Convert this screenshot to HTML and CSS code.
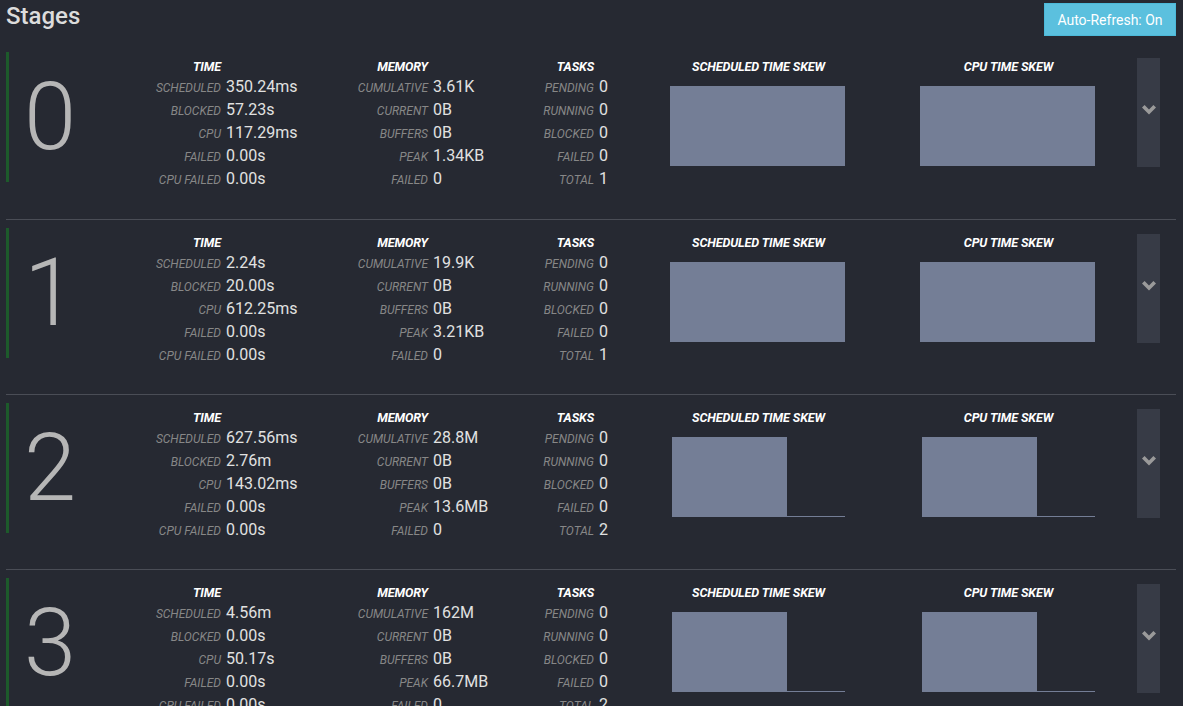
FILE: index.html
```html
<!DOCTYPE html>
<html>
<head>
<meta charset="utf-8">
<title>Stages</title>
<link rel="stylesheet" href="styles.css">
</head>
<body>
<div class="header">
  <h2 class="title">Stages</h2>
  <button class="refresh">Auto-Refresh: On</button>
</div>
<div class="stages">

  <div class="stage">
    <div class="stage-id">0</div>
    <div class="stat stat-time">
      <div class="stat-head">TIME</div><div></div>
      <div class="lbl">SCHEDULED</div><div class="val">350.24ms</div>
      <div class="lbl">BLOCKED</div><div class="val">57.23s</div>
      <div class="lbl">CPU</div><div class="val">117.29ms</div>
      <div class="lbl">FAILED</div><div class="val">0.00s</div>
      <div class="lbl">CPU FAILED</div><div class="val">0.00s</div>
    </div>
    <div class="stat stat-mem">
      <div class="stat-head">MEMORY</div><div></div>
      <div class="lbl">CUMULATIVE</div><div class="val">3.61K</div>
      <div class="lbl">CURRENT</div><div class="val">0B</div>
      <div class="lbl">BUFFERS</div><div class="val">0B</div>
      <div class="lbl">PEAK</div><div class="val">1.34KB</div>
      <div class="lbl">FAILED</div><div class="val">0</div>
    </div>
    <div class="stat stat-tasks">
      <div class="stat-head">TASKS</div><div></div>
      <div class="lbl">PENDING</div><div class="val">0</div>
      <div class="lbl">RUNNING</div><div class="val">0</div>
      <div class="lbl">BLOCKED</div><div class="val">0</div>
      <div class="lbl">FAILED</div><div class="val">0</div>
      <div class="lbl">TOTAL</div><div class="val">1</div>
    </div>
    <div class="skew skew-sched">
      <div class="skew-head">SCHEDULED TIME SKEW</div>
      <div class="chart"><div class="bar full"></div></div>
    </div>
    <div class="skew skew-cpu">
      <div class="skew-head">CPU TIME SKEW</div>
      <div class="chart"><div class="bar full"></div></div>
    </div>
    <div class="expand"><svg width="14" height="10" viewBox="0 0 14 10"><path d="M0 2.6 L2.6 0 L7 4.4 L11.4 0 L14 2.6 L7 9.6 Z" fill="#9a9a9a"/></svg></div>
  </div>

  <div class="stage">
    <div class="stage-id">1</div>
    <div class="stat stat-time">
      <div class="stat-head">TIME</div><div></div>
      <div class="lbl">SCHEDULED</div><div class="val">2.24s</div>
      <div class="lbl">BLOCKED</div><div class="val">20.00s</div>
      <div class="lbl">CPU</div><div class="val">612.25ms</div>
      <div class="lbl">FAILED</div><div class="val">0.00s</div>
      <div class="lbl">CPU FAILED</div><div class="val">0.00s</div>
    </div>
    <div class="stat stat-mem">
      <div class="stat-head">MEMORY</div><div></div>
      <div class="lbl">CUMULATIVE</div><div class="val">19.9K</div>
      <div class="lbl">CURRENT</div><div class="val">0B</div>
      <div class="lbl">BUFFERS</div><div class="val">0B</div>
      <div class="lbl">PEAK</div><div class="val">3.21KB</div>
      <div class="lbl">FAILED</div><div class="val">0</div>
    </div>
    <div class="stat stat-tasks">
      <div class="stat-head">TASKS</div><div></div>
      <div class="lbl">PENDING</div><div class="val">0</div>
      <div class="lbl">RUNNING</div><div class="val">0</div>
      <div class="lbl">BLOCKED</div><div class="val">0</div>
      <div class="lbl">FAILED</div><div class="val">0</div>
      <div class="lbl">TOTAL</div><div class="val">1</div>
    </div>
    <div class="skew skew-sched">
      <div class="skew-head">SCHEDULED TIME SKEW</div>
      <div class="chart"><div class="bar full"></div></div>
    </div>
    <div class="skew skew-cpu">
      <div class="skew-head">CPU TIME SKEW</div>
      <div class="chart"><div class="bar full"></div></div>
    </div>
    <div class="expand"><svg width="14" height="10" viewBox="0 0 14 10"><path d="M0 2.6 L2.6 0 L7 4.4 L11.4 0 L14 2.6 L7 9.6 Z" fill="#9a9a9a"/></svg></div>
  </div>

  <div class="stage">
    <div class="stage-id">2</div>
    <div class="stat stat-time">
      <div class="stat-head">TIME</div><div></div>
      <div class="lbl">SCHEDULED</div><div class="val">627.56ms</div>
      <div class="lbl">BLOCKED</div><div class="val">2.76m</div>
      <div class="lbl">CPU</div><div class="val">143.02ms</div>
      <div class="lbl">FAILED</div><div class="val">0.00s</div>
      <div class="lbl">CPU FAILED</div><div class="val">0.00s</div>
    </div>
    <div class="stat stat-mem">
      <div class="stat-head">MEMORY</div><div></div>
      <div class="lbl">CUMULATIVE</div><div class="val">28.8M</div>
      <div class="lbl">CURRENT</div><div class="val">0B</div>
      <div class="lbl">BUFFERS</div><div class="val">0B</div>
      <div class="lbl">PEAK</div><div class="val">13.6MB</div>
      <div class="lbl">FAILED</div><div class="val">0</div>
    </div>
    <div class="stat stat-tasks">
      <div class="stat-head">TASKS</div><div></div>
      <div class="lbl">PENDING</div><div class="val">0</div>
      <div class="lbl">RUNNING</div><div class="val">0</div>
      <div class="lbl">BLOCKED</div><div class="val">0</div>
      <div class="lbl">FAILED</div><div class="val">0</div>
      <div class="lbl">TOTAL</div><div class="val">2</div>
    </div>
    <div class="skew skew-sched">
      <div class="skew-head">SCHEDULED TIME SKEW</div>
      <div class="chart split"><div class="bar third"></div><div class="bar third"></div><div class="bar third low"></div></div>
    </div>
    <div class="skew skew-cpu">
      <div class="skew-head">CPU TIME SKEW</div>
      <div class="chart split"><div class="bar third"></div><div class="bar third"></div><div class="bar third low"></div></div>
    </div>
    <div class="expand"><svg width="14" height="10" viewBox="0 0 14 10"><path d="M0 2.6 L2.6 0 L7 4.4 L11.4 0 L14 2.6 L7 9.6 Z" fill="#9a9a9a"/></svg></div>
  </div>

  <div class="stage">
    <div class="stage-id">3</div>
    <div class="stat stat-time">
      <div class="stat-head">TIME</div><div></div>
      <div class="lbl">SCHEDULED</div><div class="val">4.56m</div>
      <div class="lbl">BLOCKED</div><div class="val">0.00s</div>
      <div class="lbl">CPU</div><div class="val">50.17s</div>
      <div class="lbl">FAILED</div><div class="val">0.00s</div>
      <div class="lbl">CPU FAILED</div><div class="val">0.00s</div>
    </div>
    <div class="stat stat-mem">
      <div class="stat-head">MEMORY</div><div></div>
      <div class="lbl">CUMULATIVE</div><div class="val">162M</div>
      <div class="lbl">CURRENT</div><div class="val">0B</div>
      <div class="lbl">BUFFERS</div><div class="val">0B</div>
      <div class="lbl">PEAK</div><div class="val">66.7MB</div>
      <div class="lbl">FAILED</div><div class="val">0</div>
    </div>
    <div class="stat stat-tasks">
      <div class="stat-head">TASKS</div><div></div>
      <div class="lbl">PENDING</div><div class="val">0</div>
      <div class="lbl">RUNNING</div><div class="val">0</div>
      <div class="lbl">BLOCKED</div><div class="val">0</div>
      <div class="lbl">FAILED</div><div class="val">0</div>
      <div class="lbl">TOTAL</div><div class="val">2</div>
    </div>
    <div class="skew skew-sched">
      <div class="skew-head">SCHEDULED TIME SKEW</div>
      <div class="chart split"><div class="bar third"></div><div class="bar third"></div><div class="bar third low"></div></div>
    </div>
    <div class="skew skew-cpu">
      <div class="skew-head">CPU TIME SKEW</div>
      <div class="chart split"><div class="bar third"></div><div class="bar third"></div><div class="bar third low"></div></div>
    </div>
    <div class="expand"><svg width="14" height="10" viewBox="0 0 14 10"><path d="M0 2.6 L2.6 0 L7 4.4 L11.4 0 L14 2.6 L7 9.6 Z" fill="#9a9a9a"/></svg></div>
  </div>

</div>
</body>
</html>
```
FILE: styles.css
```css
html, body {
  margin: 0;
  padding: 0;
}
body {
  background: #262932;
  font-family: Roboto, "Liberation Sans", Arial, sans-serif;
  color: #e1e1e1;
  overflow: hidden;
  height: 706px;
}
.header {
  display: flex;
  justify-content: space-between;
  align-items: flex-start;
  height: 52.3px;
  box-sizing: border-box;
  padding: 3px 7px 0 6px;
}
.title {
  margin: 0;
  font-size: 24px;
  font-weight: 500;
  line-height: 26px;
  color: #dcdcdc;
}
.refresh {
  width: 132px;
  height: 33px;
  box-sizing: border-box;
  background: #5bc0de;
  border: 1px solid #4cb9d9;
  color: #fff;
  font-family: Roboto, "Liberation Sans", Arial, sans-serif;
  font-size: 14px;
  padding: 0;
  border-radius: 0;
}
.stages {
  padding: 0 7px 0 6px;
}
.stage {
  display: flex;
  align-items: flex-start;
  height: 166.4px;
  border-bottom: 1px solid #4a4d56;
  margin-bottom: 8px;
}
.stage-id {
  width: 82px;
  height: 130px;
  border-left: 3px solid #1d5a2b;
  display: flex;
  align-items: center;
  justify-content: center;
  font-size: 94px;
  font-weight: 300;
  line-height: 1;
  color: #b6b6b6;
}
.stat {
  display: grid;
  align-items: baseline;
  padding-top: 7px;
  grid-auto-rows: 23px;
  grid-template-rows: 16px;
}
.stat-time { grid-template-columns: 130px 89px; }
.stat-mem { grid-template-columns: 118px 52px; }
.stat-tasks { grid-template-columns: 114px 46px; }
.stat-head, .skew-head {
  font-size: 12.5px;
  font-weight: 700;
  font-style: italic;
  line-height: 16px;
  color: #ffffff;
  letter-spacing: -0.1px;
}
.stat-head {
  text-align: right;
}
.lbl {
  text-align: right;
  font-size: 12px;
  font-style: italic;
  color: #878787;
  line-height: 23px;
}
.val {
  padding-left: 5px;
  font-size: 16px;
  line-height: 23px;
  color: #e1e1e1;
  white-space: nowrap;
}
.skew {
  padding-top: 7px;
  box-sizing: border-box;
}
.skew-sched { width: 235px; padding-left: 30px; }
.skew-cpu { width: 262px; padding-left: 45px; }
.skew-head {
  width: 177px;
  text-align: center;
  margin-bottom: 11px;
}
.chart {
  width: 175px;
  height: 80px;
  display: flex;
  align-items: flex-end;
}
.chart.split {
  padding-left: 2px;
  box-sizing: border-box;
}
.bar {
  background: #747e96;
}
.bar.full {
  width: 175px;
  height: 80px;
}
.bar.third {
  width: 58px;
  height: 80px;
}
.bar.low {
  height: 1px;
}
.expand {
  margin-top: 6px;
  width: 23px;
  height: 109px;
  background: #373b46;
  display: flex;
  justify-content: center;
  align-items: flex-start;
  padding-top: 47px;
  box-sizing: border-box;
}
.expand svg {
  display: block;
}
```
